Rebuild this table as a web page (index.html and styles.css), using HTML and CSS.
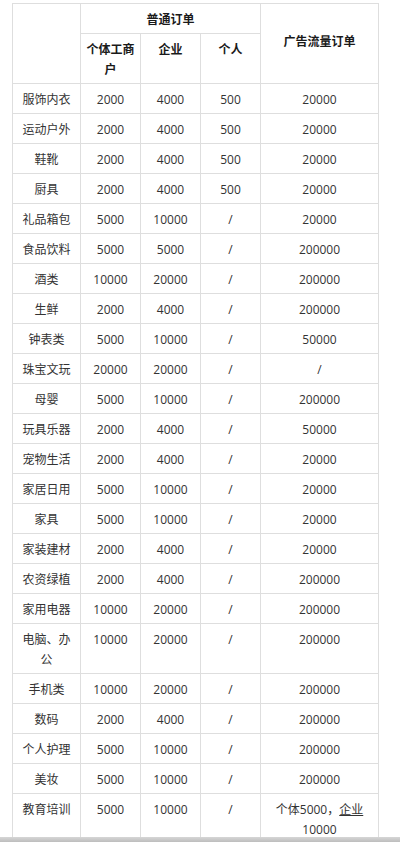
FILE: index.html
```html
<!DOCTYPE html>
<html lang="zh-CN">
<head>
<meta charset="utf-8">
<title>订单表</title>
<link rel="stylesheet" href="styles.css">
</head>
<body>
<table class="grid">
  <colgroup>
    <col class="c-cat"><col class="c-num"><col class="c-num"><col class="c-num"><col class="c-ad">
  </colgroup>
  <thead>
    <tr>
      <th rowspan="2"></th>
      <th colspan="3">普通订单</th>
      <th rowspan="2" class="mid">广告流量订单</th>
    </tr>
    <tr>
      <th>个体工商户</th>
      <th>企业</th>
      <th>个人</th>
    </tr>
  </thead>
  <tbody>
    <tr><td>服饰内衣</td><td>2000</td><td>4000</td><td>500</td><td>20000</td></tr>
    <tr><td>运动户外</td><td>2000</td><td>4000</td><td>500</td><td>20000</td></tr>
    <tr><td>鞋靴</td><td>2000</td><td>4000</td><td>500</td><td>20000</td></tr>
    <tr><td>厨具</td><td>2000</td><td>4000</td><td>500</td><td>20000</td></tr>
    <tr><td>礼品箱包</td><td>5000</td><td>10000</td><td>/</td><td>20000</td></tr>
    <tr><td>食品饮料</td><td>5000</td><td>5000</td><td>/</td><td>200000</td></tr>
    <tr><td>酒类</td><td>10000</td><td>20000</td><td>/</td><td>200000</td></tr>
    <tr><td>生鲜</td><td>2000</td><td>4000</td><td>/</td><td>200000</td></tr>
    <tr><td>钟表类</td><td>5000</td><td>10000</td><td>/</td><td>50000</td></tr>
    <tr><td>珠宝文玩</td><td>20000</td><td>20000</td><td>/</td><td>/</td></tr>
    <tr><td>母婴</td><td>5000</td><td>10000</td><td>/</td><td>200000</td></tr>
    <tr><td>玩具乐器</td><td>2000</td><td>4000</td><td>/</td><td>50000</td></tr>
    <tr><td>宠物生活</td><td>2000</td><td>4000</td><td>/</td><td>20000</td></tr>
    <tr><td>家居日用</td><td>5000</td><td>10000</td><td>/</td><td>20000</td></tr>
    <tr><td>家具</td><td>5000</td><td>10000</td><td>/</td><td>20000</td></tr>
    <tr><td>家装建材</td><td>2000</td><td>4000</td><td>/</td><td>20000</td></tr>
    <tr><td>农资绿植</td><td>2000</td><td>4000</td><td>/</td><td>200000</td></tr>
    <tr><td>家用电器</td><td>10000</td><td>20000</td><td>/</td><td>200000</td></tr>
    <tr><td>电脑、办公</td><td>10000</td><td>20000</td><td>/</td><td>200000</td></tr>
    <tr><td>手机类</td><td>10000</td><td>20000</td><td>/</td><td>200000</td></tr>
    <tr><td>数码</td><td>2000</td><td>4000</td><td>/</td><td>200000</td></tr>
    <tr><td>个人护理</td><td>5000</td><td>10000</td><td>/</td><td>200000</td></tr>
    <tr><td>美妆</td><td>5000</td><td>10000</td><td>/</td><td>200000</td></tr>
    <tr><td>教育培训</td><td>5000</td><td>10000</td><td>/</td><td>个体5000，<span class="kw">企业</span>10000</td></tr>
  </tbody>
</table>
<div class="bottom-bar"></div>
</body>
</html>
```

FILE: styles.css
```css
html, body {
  margin: 0;
  padding: 0;
  background: #ffffff;
}

body {
  font-family: "Open Sans", "Noto Sans CJK SC", sans-serif;
  font-size: 12px;
  color: #333333;
}

.grid {
  margin: 3px 0 0 12px;
  border-collapse: separate;
  border-spacing: 0;
  table-layout: fixed;
  width: 367px;
  border-top: 1px solid #dedede;
  border-left: 1px solid #dedede;
}

.c-cat { width: 68px; }
.c-num { width: 60px; }
.c-ad { width: 118px; }

.grid th,
.grid td {
  box-sizing: border-box;
  border-right: 1px solid #dedede;
  border-bottom: 1px solid #dedede;
  padding: 6px 4px 3px;
  line-height: 20px;
  text-align: center;
  vertical-align: top;
}

.grid th {
  font-weight: bold;
  color: #1a1a1a;
}

.grid th.mid {
  vertical-align: middle;
  padding-bottom: 10px;
}

.kw {
  text-decoration: underline;
}

.bottom-bar {
  position: fixed;
  left: 0;
  right: 0;
  bottom: 0;
  height: 5px;
  background: linear-gradient(#d6d6d6, #bdbdbd);
}
```
